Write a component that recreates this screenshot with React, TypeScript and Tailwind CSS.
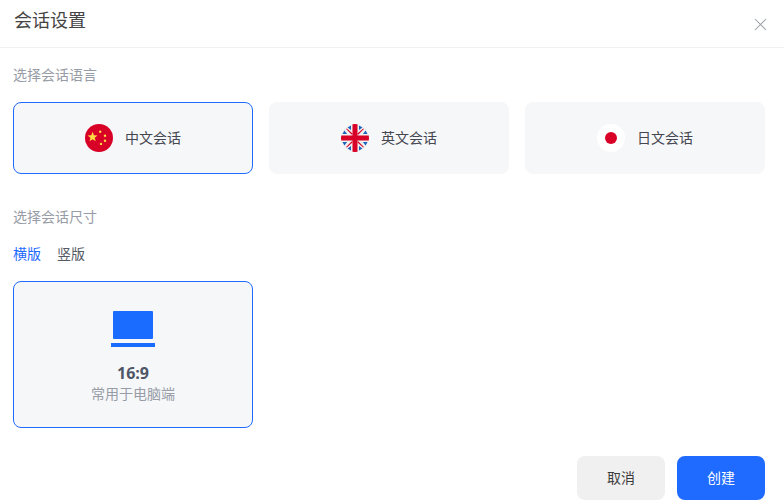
import React, { useState } from 'react';
import { X } from 'lucide-react';

const ChinaFlag = () => (
  <svg viewBox="0 0 28 28" className="w-7 h-7 shrink-0">
    <circle cx="14" cy="14" r="14" fill="#d80027" />
    <polygon
      fill="#ffda44"
      points="7.6,7.8 8.9,11.3 12.6,11.4 9.7,13.7 10.7,17.3 7.6,15.2 4.5,17.3 5.5,13.7 2.6,11.4 6.3,11.3"
    />
    <circle cx="15.2" cy="7.7" r="1.2" fill="#ffda44" />
    <circle cx="20" cy="11.7" r="1.2" fill="#ffda44" />
    <circle cx="20" cy="16.7" r="1.2" fill="#ffda44" />
    <circle cx="16" cy="19.9" r="1.2" fill="#ffda44" />
  </svg>
);

const UkFlag = () => (
  <svg viewBox="0 0 28 28" className="w-7 h-7 shrink-0">
    <defs>
      <clipPath id="ukClip">
        <circle cx="14" cy="14" r="14" />
      </clipPath>
    </defs>
    <g clipPath="url(#ukClip)">
      <rect width="28" height="28" fill="#f0f0f0" />
      <path
        fill="#1a62bd"
        d="M1.5 10h4.6L3.4 6.6zM6.6 3.4 10 6.1V1.5zM18 1.5v4.6l3.4-2.7zM24.6 6.6 21.9 10h4.6zM1.5 18h4.6l-2.7 3.4zM10 21.9v4.6l-3.4-2.1zM18 21.9l3.4 2.5-3.4 2.1zM21.9 18h4.6l-1.9 3.4z"
      />
      <path fill="#d80027" d="M0 11.5h11.5V0h5v11.5H28v5H16.5V28h-5V16.5H0z" />
      <path
        fill="#d80027"
        d="M17.5 17.5l5.4 5.4-.7.7-5.7-5.2v-.9zM10.5 10.5 5.1 5.1l.7-.7 5.7 5.2v.9zM17.5 10.5h-1V9.6l5.7-5.2.7.7zM10.5 17.5h1v.9l-5.7 5.2-.7-.7z"
      />
    </g>
  </svg>
);

const JapanFlag = () => (
  <svg viewBox="0 0 28 28" className="w-7 h-7 shrink-0">
    <circle cx="14" cy="14" r="14" fill="#ffffff" />
    <circle cx="14" cy="14" r="6" fill="#d80027" />
  </svg>
);

const languages = [
  { id: 'zh', label: '中文会话', flag: <ChinaFlag /> },
  { id: 'en', label: '英文会话', flag: <UkFlag /> },
  { id: 'ja', label: '日文会话', flag: <JapanFlag /> },
];

export default function App() {
  const [lang, setLang] = useState('zh');
  const [orient, setOrient] = useState('横版');

  return (
    <div className="w-[784px] h-[504px] bg-white overflow-hidden flex flex-col font-['Noto_Sans','Noto_Sans_CJK_SC',sans-serif]">
      {/* header */}
      <div className="h-12 shrink-0 border-b border-[#f0f1f3] pl-3.5 pr-[13px] flex justify-between">
        <div className="text-lg leading-6 pt-2 text-[#444444]">会话设置</div>
        <X className="w-[21px] h-[21px] mt-[14px] text-[#9a9ea6]" strokeWidth={1.2} />
      </div>

      <div className="flex-1 flex flex-col pl-[13px] pr-[19px]">
        <div className="text-sm leading-5 mt-[17px] text-[#979ca6]">选择会话语言</div>

        <div className="flex gap-4 mt-[17px]">
          {languages.map((item) => (
            <button
              key={item.id}
              onClick={() => setLang(item.id)}
              className={`w-60 h-[72px] rounded-lg bg-[#f6f7f9] border flex items-center justify-center gap-3 ${
                lang === item.id ? 'border-[#1f6bff]' : 'border-[#f6f7f9]'
              }`}
            >
              {item.flag}
              <span className="text-sm text-[#444750]">{item.label}</span>
            </button>
          ))}
        </div>

        <div className="text-sm leading-5 mt-[33px] text-[#979ca6]">选择会话尺寸</div>

        <div className="flex gap-4 mt-[17px] text-sm leading-5">
          {['横版', '竖版'].map((t) => (
            <button key={t} onClick={() => setOrient(t)} className={orient === t ? 'text-[#1f6bff]' : 'text-[#555a66]'}>
              {t}
            </button>
          ))}
        </div>

        <div className="w-60 h-[147px] mt-[17px] rounded-lg bg-[#f6f7f9] border border-[#1f6bff] flex flex-col items-center">
          <div className="w-10 h-7 mt-[29px] bg-[#1a6bff] rounded-[1px]" />
          <div className="w-11 h-1 mt-1 bg-[#1a6bff]" />
          <div className="text-base leading-5 font-bold mt-4 text-[#4d5566] font-['Open_Sans',sans-serif]">16:9</div>
          <div className="text-sm leading-5 mt-[1px] text-[#979ca6]">常用于电脑端</div>
        </div>

        <div className="flex justify-end gap-3 mt-7">
          <button className="w-[88px] h-11 rounded-lg bg-[#f1f0f0] text-sm text-[#3c3c3c]">取消</button>
          <button className="w-[88px] h-11 rounded-lg bg-[#1f6bff] text-sm text-white">创建</button>
        </div>
      </div>
    </div>
  );
}
